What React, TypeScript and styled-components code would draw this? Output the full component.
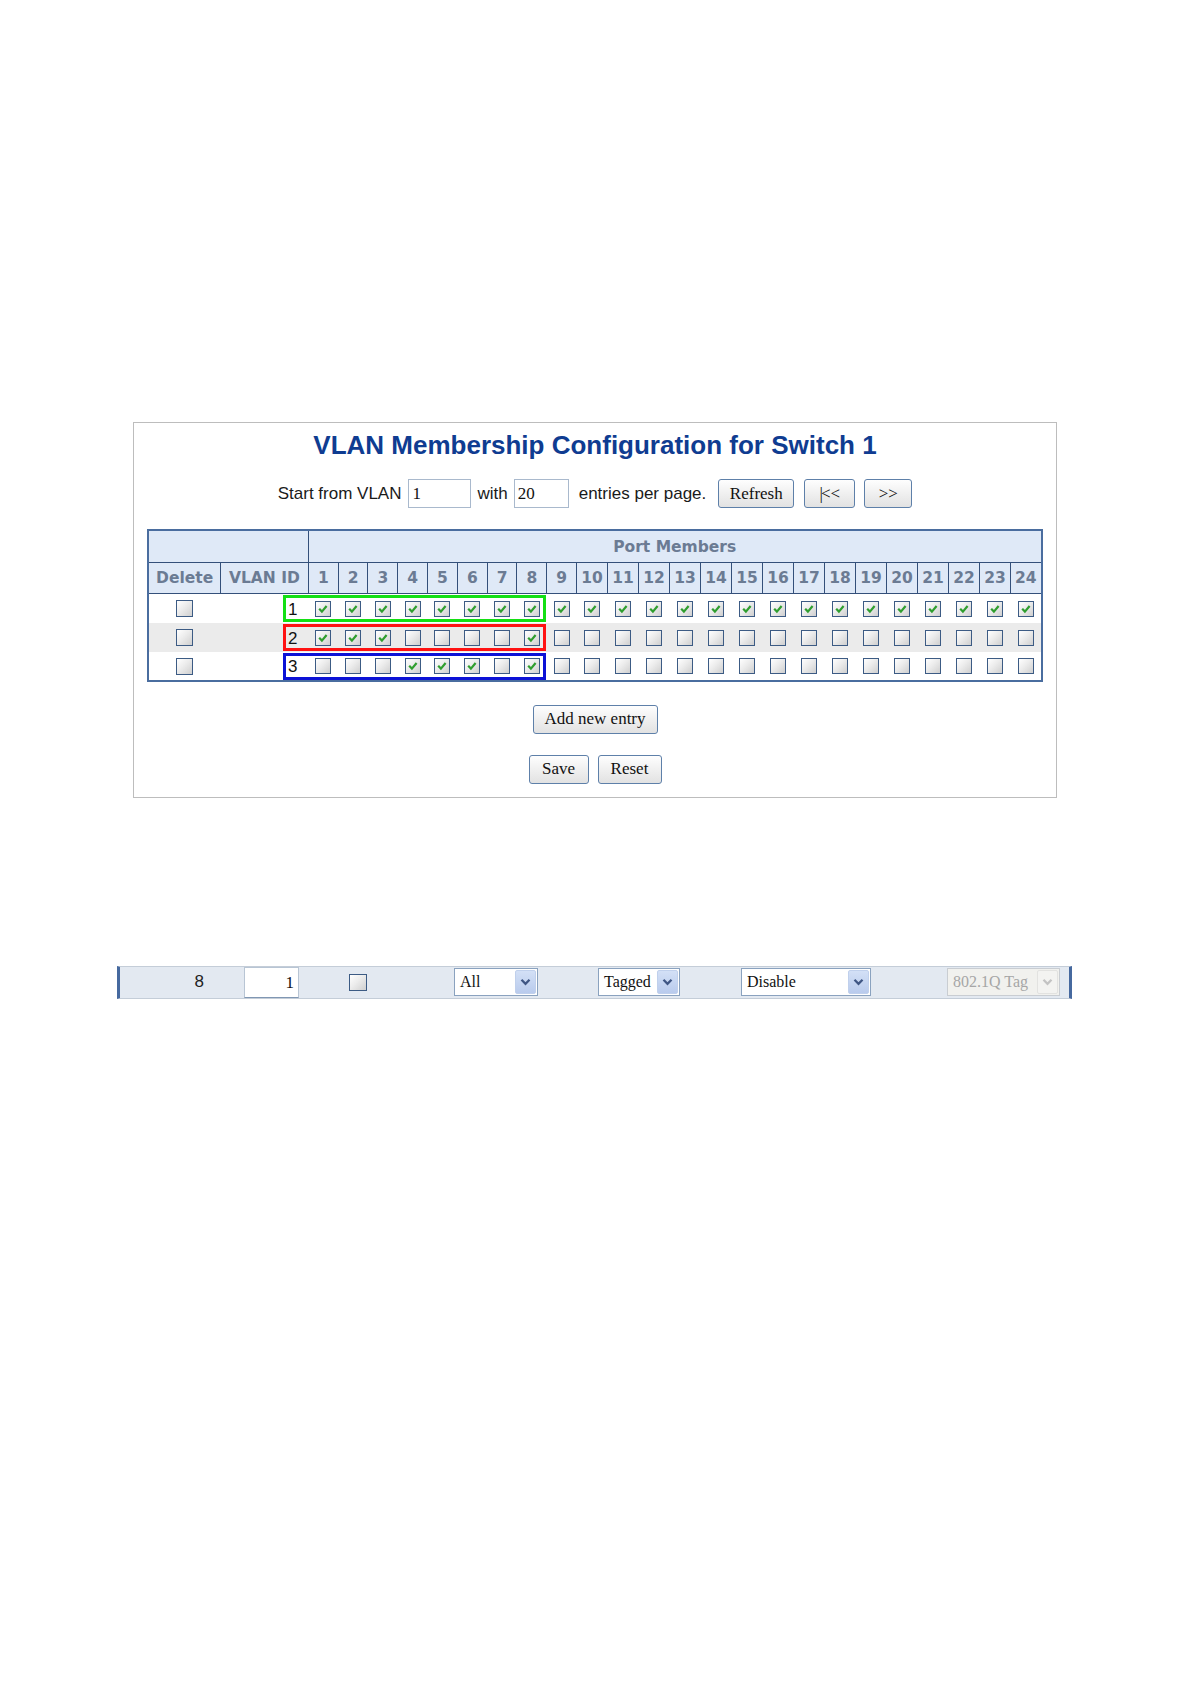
import React from "react";
import styled, { createGlobalStyle } from "styled-components";

const Global = createGlobalStyle`
  html, body { margin: 0; padding: 0; background: #ffffff; }
  body { font-family: "Liberation Sans", Arial, sans-serif; color: #111; }
`;

const Page = styled.div`
  padding-top: 422px;
  min-height: 1684px;
  box-sizing: border-box;
`;

const Panel = styled.section`
  box-sizing: border-box;
  width: 924px;
  margin-left: 133px;
  border: 1px solid #bdbdbd;
  padding: 7px 0 13px;
  display: flex;
  flex-direction: column;
  align-items: center;
`;

const Title = styled.h1`
  margin: 0;
  font: bold 26px/30px "Liberation Sans", Arial, sans-serif;
  color: #0f3c91;
  white-space: nowrap;
`;

const Controls = styled.div`
  display: flex;
  align-items: center;
  margin-top: 19px;
  font: 17px/20px "Liberation Sans", Arial, sans-serif;
  color: #1a1a1a;
`;

const Label = styled.span<{ $ml?: number }>`
  margin-left: ${(p) => p.$ml ?? 0}px;
  white-space: nowrap;
`;

const Field = styled.input<{ $w: number; $ml?: number }>`
  box-sizing: border-box;
  width: ${(p) => p.$w}px;
  height: 29px;
  margin: 0 0 0 ${(p) => p.$ml ?? 0}px;
  padding: 0 3px;
  border: 1px solid #a9b9cd;
  background: #fff;
  font: 17px "Liberation Serif", "Times New Roman", serif;
  color: #111;
  outline: none;
`;

const Button = styled.button<{ $w: number; $ml?: number }>`
  box-sizing: border-box;
  width: ${(p) => p.$w}px;
  height: 29px;
  margin: 0 0 0 ${(p) => p.$ml ?? 0}px;
  padding: 0;
  border: 1px solid #5e80a9;
  border-radius: 3px;
  background: linear-gradient(#fefefe, #ededed 60%, #e2e2e2);
  font: 17px "Liberation Serif", "Times New Roman", serif;
  color: #111;
  white-space: nowrap;
`;

const Bar = styled.span`
  letter-spacing: -2px;
`;

const ButtonRow = styled.div<{ $mt: number }>`
  display: flex;
  gap: 9px;
  margin-top: ${(p) => p.$mt}px;
`;

const Grid = styled.table`
  margin-top: 21px;
  width: 894px;
  table-layout: fixed;
  border-collapse: collapse;
  border: 2px solid #4a6d9f;
`;

const HeadCell = styled.th<{ $h: number }>`
  height: ${(p) => p.$h}px;
  padding: 0;
  background: #dfe9f7;
  border: 1px solid #34507a;
  color: #6b7b93;
  font: bold 15.5px/18px "DejaVu Sans", Verdana, sans-serif;
  text-align: center;
  white-space: nowrap;
  overflow: hidden;
`;

const BodyRow = styled.tr<{ $alt?: boolean }>`
  height: 29px;
  background: ${(p) => (p.$alt ? "#ebebeb" : "#ffffff")};
`;

const Cell = styled.td`
  padding: 0;
  text-align: center;
  vertical-align: middle;
`;

const IdCell = styled.td`
  position: relative;
  padding: 3px 11px 0 0;
  text-align: right;
  vertical-align: middle;
  font: 17px/20px "Liberation Sans", Arial, sans-serif;
  color: #111;
`;

const Highlight = styled.span<{ $color: string }>`
  position: absolute;
  left: 63px;
  top: 1px;
  width: 263px;
  height: 27px;
  box-sizing: border-box;
  border: 3px solid ${(p) => p.$color};
  pointer-events: none;
  z-index: 2;
`;

const Box = styled.span<{ $w?: number; $h?: number }>`
  display: inline-block;
  box-sizing: border-box;
  width: ${(p) => p.$w ?? 16}px;
  height: ${(p) => p.$h ?? 16}px;
  border: 1px solid #3c5b84;
  background: linear-gradient(135deg, #ffffff 0%, #ececec 45%, #cfcfcf 100%);
  vertical-align: middle;
  position: relative;
`;

const CheckSvg = styled.svg`
  position: absolute;
  left: 1px;
  top: 1px;
`;

const CheckBox = ({ checked, w, h }: { checked?: boolean; w?: number; h?: number }) => (
  <Box $w={w} $h={h}>
    {checked && (
      <CheckSvg width="12" height="12" viewBox="0 0 12 12">
        <path d="M2.2 5.8 L4.9 8.6 L9.6 3" fill="none" stroke="#2f9e2f" strokeWidth="2.2" />
      </CheckSvg>
    )}
  </Box>
);

const Strip = styled.div`
  box-sizing: border-box;
  width: 955px;
  height: 33px;
  margin: 168px 0 0 117px;
  background: #e3e9f1;
  border-top: 1px solid #c4cdd8;
  border-bottom: 1px solid #c4cdd8;
  border-left: 3px solid #46699f;
  border-right: 3px solid #46699f;
  display: flex;
  align-items: center;
`;

const StripNum = styled.span`
  width: 84px;
  text-align: right;
  font: 17px "Liberation Sans", Arial, sans-serif;
  color: #222;
`;

const StripField = styled.div<{ $ml: number }>`
  box-sizing: border-box;
  width: 55px;
  height: 31px;
  margin-left: ${(p) => p.$ml}px;
  padding-right: 4px;
  background: #fff;
  border: 1px solid #b8c5d4;
  border-bottom-color: #8097b3;
  font: 17px/29px "Liberation Serif", "Times New Roman", serif;
  text-align: right;
  color: #111;
`;

const Slot = styled.span<{ $ml: number }>`
  margin-left: ${(p) => p.$ml}px;
  display: inline-flex;
`;

const Select = styled.div<{ $w: number; $ml: number; $disabled?: boolean }>`
  box-sizing: border-box;
  width: ${(p) => p.$w}px;
  height: 28px;
  margin-left: ${(p) => p.$ml}px;
  display: flex;
  align-items: center;
  justify-content: space-between;
  padding: 0 1px 0 5px;
  border: 1px solid ${(p) => (p.$disabled ? "#c9cdd2" : "#8aa2bf")};
  background: ${(p) => (p.$disabled ? "#f1f1ee" : "#ffffff")};
  font: 16px "Liberation Serif", "Times New Roman", serif;
  color: ${(p) => (p.$disabled ? "#a6a6a6" : "#111")};
  white-space: nowrap;
`;

const Arrow = styled.span<{ $disabled?: boolean }>`
  box-sizing: border-box;
  width: 21px;
  height: 24px;
  display: flex;
  align-items: center;
  justify-content: center;
  border-radius: 2px;
  background: ${(p) =>
    p.$disabled ? "#f3f3f1" : "linear-gradient(#d3e0f6, #b9cbed)"};
  border: 1px solid ${(p) => (p.$disabled ? "#e2e2e0" : "#c0d0ec")};
`;

const Chevron = ({ color }: { color: string }) => (
  <svg width="11" height="8" viewBox="0 0 11 8">
    <path d="M1.5 1.8 L5.5 5.8 L9.5 1.8" fill="none" stroke={color} strokeWidth="2.3" />
  </svg>
);

const portWidths = Array.from({ length: 24 }, (_, i) => (i < 9 ? 29.8 : 31));

const rows: { id: number; checked: number[]; color: string; alt?: boolean }[] = [
  { id: 1, checked: Array.from({ length: 24 }, (_, i) => i + 1), color: "#14df14" },
  { id: 2, checked: [1, 2, 3, 8], color: "#ff1212", alt: true },
  { id: 3, checked: [4, 5, 6, 8], color: "#0c12d6" },
];

export default function App() {
  return (
    <Page>
      <Global />
      <Panel>
        <Title>VLAN Membership Configuration for Switch 1</Title>
        <Controls>
          <Label>Start from VLAN</Label>
          <Field $w={63} $ml={7} defaultValue="1" readOnly />
          <Label $ml={6}>with</Label>
          <Field $w={55} $ml={6} defaultValue="20" readOnly />
          <Label $ml={10}>entries per page.</Label>
          <Button $w={76} $ml={12}>Refresh</Button>
          <Button $w={51} $ml={10}>
            <Bar>|</Bar>&lt;&lt;
          </Button>
          <Button $w={48} $ml={9}>&gt;&gt;</Button>
        </Controls>

        <Grid>
          <colgroup>
            <col style={{ width: 72 }} />
            <col style={{ width: 88 }} />
            {portWidths.map((w, i) => (
              <col key={i} style={{ width: w }} />
            ))}
          </colgroup>
          <thead>
            <tr>
              <HeadCell $h={31} colSpan={2}>&nbsp;</HeadCell>
              <HeadCell $h={31} colSpan={24}>Port Members</HeadCell>
            </tr>
            <tr>
              <HeadCell $h={30}>Delete</HeadCell>
              <HeadCell $h={30}>VLAN ID</HeadCell>
              {portWidths.map((_, i) => (
                <HeadCell $h={30} key={i}>{i + 1}</HeadCell>
              ))}
            </tr>
          </thead>
          <tbody>
            {rows.map((r) => (
              <BodyRow key={r.id} $alt={r.alt}>
                <Cell>
                  <CheckBox w={17} h={17} />
                </Cell>
                <IdCell>
                  {r.id}
                  <Highlight $color={r.color} />
                </IdCell>
                {portWidths.map((_, i) => (
                  <Cell key={i}>
                    <CheckBox checked={r.checked.includes(i + 1)} />
                  </Cell>
                ))}
              </BodyRow>
            ))}
          </tbody>
        </Grid>

        <ButtonRow $mt={23}>
          <Button $w={125}>Add new entry</Button>
        </ButtonRow>
        <ButtonRow $mt={21}>
          <Button $w={60}>Save</Button>
          <Button $w={64}>Reset</Button>
        </ButtonRow>
      </Panel>

      <Strip>
        <StripNum>8</StripNum>
        <StripField $ml={40}>1</StripField>
        <Slot $ml={50}>
          <CheckBox w={18} h={17} />
        </Slot>
        <Select $w={84} $ml={87}>
          All
          <Arrow>
            <Chevron color="#3f5684" />
          </Arrow>
        </Select>
        <Select $w={82} $ml={60}>
          Tagged
          <Arrow>
            <Chevron color="#3f5684" />
          </Arrow>
        </Select>
        <Select $w={130} $ml={61}>
          Disable
          <Arrow>
            <Chevron color="#3f5684" />
          </Arrow>
        </Select>
        <Select $w={113} $ml={76} $disabled>
          802.1Q Tag
          <Arrow $disabled>
            <Chevron color="#c3c3c3" />
          </Arrow>
        </Select>
      </Strip>
    </Page>
  );
}
